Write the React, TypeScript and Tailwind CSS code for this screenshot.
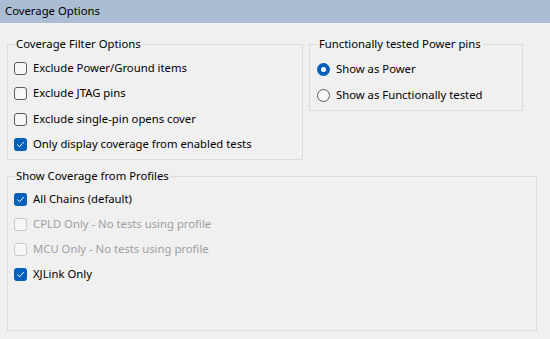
import React from "react";

const Check = ({ checked = false, disabled = false }: { checked?: boolean; disabled?: boolean }) => {
  if (checked) {
    return (
      <span className="w-[13px] h-[13px] rounded-[3px] bg-[#005fb8] flex items-center justify-center shrink-0">
        <svg width="9" height="9" viewBox="0 0 9 9" fill="none">
          <path d="M1.5 4.8 L3.6 6.8 L7.6 2.2" stroke="#ffffff" strokeWidth="1" strokeLinecap="round" strokeLinejoin="round" />
        </svg>
      </span>
    );
  }
  return (
    <span
      className={`w-[13px] h-[13px] rounded-[3px] border shrink-0 bg-[#f7f7f7] ${
        disabled ? "border-[#c8c8c8]" : "border-[#5c5c5c]"
      }`}
    />
  );
};

const Radio = ({ checked = false }: { checked?: boolean }) =>
  checked ? (
    <span className="w-[13px] h-[13px] rounded-full bg-[#005fb8] flex items-center justify-center shrink-0">
      <span className="w-[5px] h-[5px] rounded-full bg-white" />
    </span>
  ) : (
    <span className="w-[13px] h-[13px] rounded-full border border-[#5c5c5c] bg-[#f7f7f7] shrink-0" />
  );

const Row = ({
  label,
  checked,
  disabled,
  tall,
}: {
  label: string;
  checked?: boolean;
  disabled?: boolean;
  tall?: boolean;
}) => (
  <div className={`${tall ? "h-[25.3px]" : "h-[25px]"} flex items-center gap-[6px]`}>
    <Check checked={checked} disabled={disabled} />
    <span className={disabled ? "text-[#a0a0a0]" : "text-black"}>{label}</span>
  </div>
);

const Group = ({
  title,
  className,
  children,
}: {
  title: string;
  className: string;
  children: React.ReactNode;
}) => (
  <fieldset className={`border border-[#dcdcdc] m-0 ${className}`}>
    <legend className="ml-[1px] px-[1px] leading-[14px]">{title}</legend>
    {children}
  </fieldset>
);

export default function App() {
  return (
    <div
      className="w-[550px] h-[339px] bg-[#f0f0f0] text-[11.3px] text-black overflow-hidden"
      style={{ fontFamily: '"Segoe UI", "Noto Sans", sans-serif' }}
    >
      <div className="h-[23px] bg-[#abbdd3] flex items-center pl-[5px]">Coverage Options</div>

      <div className="flex items-start pl-[7px] mt-[14px]">
        <Group title="Coverage Filter Options" className="w-[296px] h-[123px] pl-[6px] pt-[5px]">
          <Row label="Exclude Power/Ground items" tall />
          <Row label="Exclude JTAG pins" tall />
          <Row label="Exclude single-pin opens cover" tall />
          <Row label="Only display coverage from enabled tests" checked tall />
        </Group>

        <Group title="Functionally tested Power pins" className="ml-[6px] w-[214px] h-[74px] pl-[7px] pt-[5px]">
          <div className="h-[26px] flex items-center gap-[6px]">
            <Radio checked />
            <span>Show as Power</span>
          </div>
          <div className="h-[26px] flex items-center gap-[6px]">
            <Radio />
            <span>Show as Functionally tested</span>
          </div>
        </Group>
      </div>

      <div className="pl-[7px] mt-[9px]">
        <Group title="Show Coverage from Profiles" className="w-[530px] h-[162px] pl-[6px] pt-[4px]">
          <Row label="All Chains (default)" checked />
          <Row label="CPLD Only - No tests using profile" disabled />
          <Row label="MCU Only - No tests using profile" disabled />
          <Row label="XJLink Only" checked />
        </Group>
      </div>
    </div>
  );
}
